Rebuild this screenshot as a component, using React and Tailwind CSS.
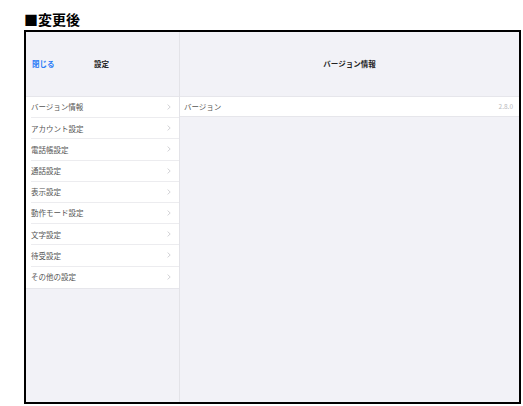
import React from 'react';

const menuItems = [
  'バージョン情報',
  'アカウント設定',
  '電話帳設定',
  '通話設定',
  '表示設定',
  '動作モード設定',
  '文字設定',
  '待受設定',
  'その他の設定',
];

const Chevron = () => (
  <svg width="4" height="6" viewBox="0 0 4 6" className="shrink-0">
    <path d="M0.6 0.6 L3.2 3 L0.6 5.4" fill="none" stroke="#c7c7cc" strokeWidth="0.8" />
  </svg>
);

const App = () => {
  return (
    <div
      className="w-[523px] h-[406px] bg-white relative"
      style={{ fontFamily: '"Noto Sans CJK JP", "Noto Sans", sans-serif' }}
    >
      {/* Title */}
      <div className="pl-[24px] pt-[10px] h-[30px] text-[14px] font-bold leading-[18px] text-black">
        ■変更後
      </div>

      {/* Screenshot frame */}
      <div className="ml-[24px] w-[497px] h-[374px] border-2 border-black flex bg-[#f2f2f7]">
        {/* Sidebar */}
        <div className="w-[154px] flex flex-col border-r border-[#e3e3e8]">
          <div className="h-[64px] flex items-center text-[7.5px] font-bold">
            <span className="pl-[6px] text-[#2d7cf6] w-[68px]">閉じる</span>
            <span className="text-[#222]">設定</span>
          </div>
          <div className="bg-white border-t border-b border-[#e6e6eb]">
            {menuItems.map((item, index) => (
              <div key={item} className="h-[21.2px] flex items-stretch pl-[5px]">
                <div
                  className={
                    'flex-1 flex items-center justify-between pr-[8px] ' +
                    (index < menuItems.length - 1 ? 'border-b border-[#ececef]' : '')
                  }
                >
                  <span className="text-[7.5px] text-[#555]">{item}</span>
                  <Chevron />
                </div>
              </div>
            ))}
          </div>
        </div>

        {/* Detail */}
        <div className="flex-1 flex flex-col">
          <div className="h-[64px] flex items-center justify-center text-[7.5px] font-bold text-[#222]">
            バージョン情報
          </div>
          <div className="h-[21.2px] bg-white border-t border-b border-[#e6e6eb] flex items-center justify-between pl-[4px] pr-[6px]">
            <span className="text-[7.5px] text-[#555]">バージョン</span>
            <span className="text-[6.5px] text-[#b8b8bc]">2.8.0</span>
          </div>
        </div>
      </div>
    </div>
  );
};

export default App;
